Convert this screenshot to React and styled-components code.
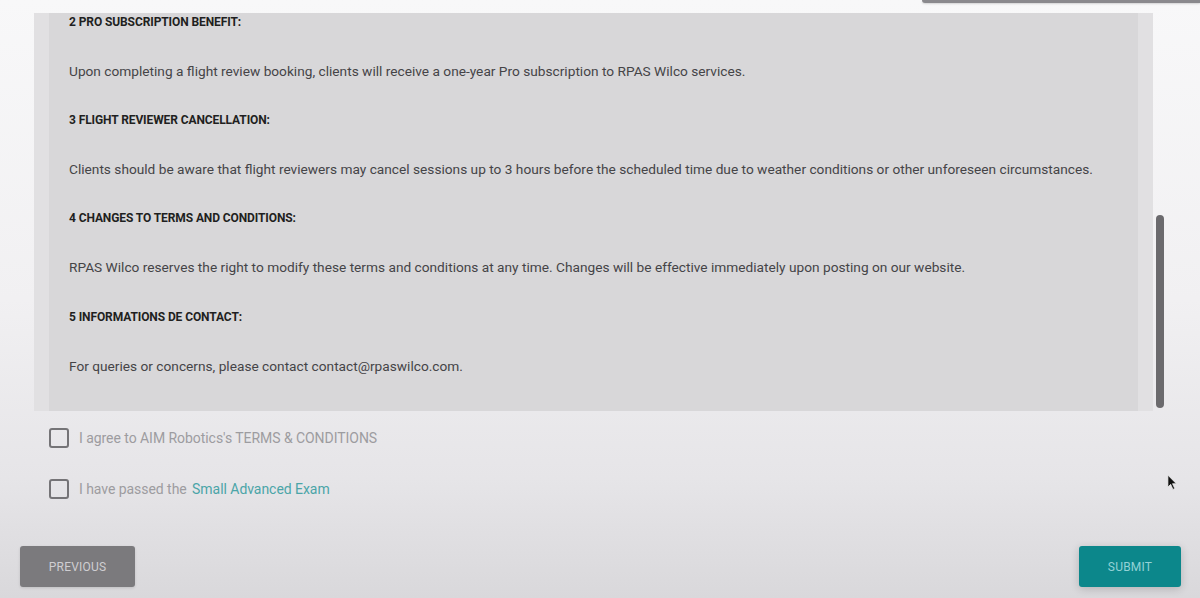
import React from "react";
import styled, { createGlobalStyle } from "styled-components";

const GlobalStyle = createGlobalStyle`
    html, body {
        margin: 0;
        padding: 0;
    }
    body {
        font-family: Roboto, "Liberation Sans", Arial, sans-serif;
        background: #ecebee;
    }
`;

const terms = [
    {
        title: "2 PRO SUBSCRIPTION BENEFIT:",
        text: "Upon completing a flight review booking, clients will receive a one-year Pro subscription to RPAS Wilco services."
    },
    {
        title: "3 FLIGHT REVIEWER CANCELLATION:",
        text: "Clients should be aware that flight reviewers may cancel sessions up to 3 hours before the scheduled time due to weather conditions or other unforeseen circumstances."
    },
    {
        title: "4 CHANGES TO TERMS AND CONDITIONS:",
        text: "RPAS Wilco reserves the right to modify these terms and conditions at any time. Changes will be effective immediately upon posting on our website."
    },
    {
        title: "5 INFORMATIONS DE CONTACT:",
        text: "For queries or concerns, please contact contact@rpaswilco.com."
    }
];

export default function App() {
    return (
        <>
            <GlobalStyle />
            <Page>
                <MenuEdge />
                <TermsRow>
                    <TermsBox>
                        <TermsContent>
                            {terms.map((t) => (
                                <React.Fragment key={t.title}>
                                    <Title>{t.title}</Title>
                                    <Paragraph>{t.text}</Paragraph>
                                </React.Fragment>
                            ))}
                        </TermsContent>
                    </TermsBox>
                    <ScrollTrack>
                        <ScrollThumb />
                    </ScrollTrack>
                </TermsRow>

                <Checks>
                    <CheckRow>
                        <Checkbox />
                        <Label>I agree to AIM Robotics's TERMS &amp; CONDITIONS</Label>
                    </CheckRow>
                    <CheckRow>
                        <Checkbox />
                        <Label>
                            I have passed the <LinkText>Small Advanced Exam</LinkText>
                        </Label>
                    </CheckRow>
                </Checks>

                <Footer>
                    <Button>PREVIOUS</Button>
                    <Button primary>SUBMIT</Button>
                </Footer>

                <Cursor viewBox="0 0 12 18">
                    <path d="M1 1 L1 14 L4 11 L6.5 16.5 L8.5 15.6 L6 10.3 L10.2 10.3 Z" fill="#111" stroke="#eee" strokeWidth="0.8" />
                </Cursor>
            </Page>
        </>
    );
}

const Page = styled.div`
    position: relative;
    width: 1200px;
    height: 598px;
    overflow: hidden;
    box-sizing: border-box;
    padding-top: 13px;
    display: flex;
    flex-direction: column;
    background: linear-gradient(180deg, #f8f8f9 0%, #f1f0f2 50%, #e6e5e8 80%, #d9d8db 100%);
`;

/* нижній край випадного меню, що виглядає зверху */
const MenuEdge = styled.div`
    position: absolute;
    top: 0;
    right: 0;
    width: 278px;
    height: 3px;
    background: #8a898d;
    border-bottom-left-radius: 4px;
    box-shadow: 0 1px 2px rgba(0, 0, 0, 0.15);
`;

const TermsRow = styled.div`
    display: flex;
    align-items: stretch;
    padding-left: 34px;
    gap: 3px;
    height: 398px;
`;

const TermsBox = styled.div`
    width: 1119px;
    background: #e1e0e2;
    padding: 0 15px;
    box-sizing: border-box;
    display: flex;
`;

const TermsContent = styled.div`
    flex: 1;
    background: #d8d7d9;
    padding: 1px 0 0 20px;
    display: flex;
    flex-direction: column;
    gap: 33.1px;
`;

const Title = styled.div`
    font-size: 12px;
    line-height: 16px;
    font-weight: 700;
    color: #1f1f21;
    letter-spacing: -0.1px;
`;

const Paragraph = styled.div`
    font-size: 13.7px;
    line-height: 16px;
    color: #454447;
`;

const ScrollTrack = styled.div`
    width: 8px;
    display: flex;
    flex-direction: column;
    justify-content: flex-end;
    padding-bottom: 3px;
`;

const ScrollThumb = styled.div`
    height: 193px;
    border-radius: 4px;
    background: #6b6a6d;
`;

const Checks = styled.div`
    display: flex;
    flex-direction: column;
    gap: 31px;
    padding: 17px 0 0 49px;
`;

const CheckRow = styled.div`
    display: flex;
    align-items: center;
    gap: 10px;
    height: 20px;
`;

const Checkbox = styled.span`
    width: 20px;
    height: 20px;
    box-sizing: border-box;
    border: 2px solid #757477;
    border-radius: 3px;
`;

const Label = styled.span`
    font-size: 14px;
    color: #9d9ca0;
    letter-spacing: -0.05px;
`;

const LinkText = styled.span`
    color: #4ba5a8;
    margin-left: 2px;
`;

const Footer = styled.div`
    display: flex;
    justify-content: space-between;
    padding: 0 19px 0 20px;
    margin-top: 47px;
`;

const Button = styled.button`
    height: 41px;
    width: ${({ primary }) => (primary ? "102px" : "115px")};
    border: none;
    border-radius: 3px;
    font-family: Roboto, "Liberation Sans", Arial, sans-serif;
    font-size: 12px;
    letter-spacing: 0.2px;
    background: ${({ primary }) => (primary ? "#0c878b" : "#7b7a7d")};
    color: ${({ primary }) => (primary ? "#93d2d6" : "#cfced1")};
    box-shadow: ${({ primary }) =>
        primary ? "0 2px 8px rgba(0, 0, 0, 0.18)" : "0 1px 3px rgba(0, 0, 0, 0.12)"};
`;

const Cursor = styled.svg`
    position: absolute;
    left: 1167px;
    top: 474px;
    width: 11px;
    height: 17px;
`;
